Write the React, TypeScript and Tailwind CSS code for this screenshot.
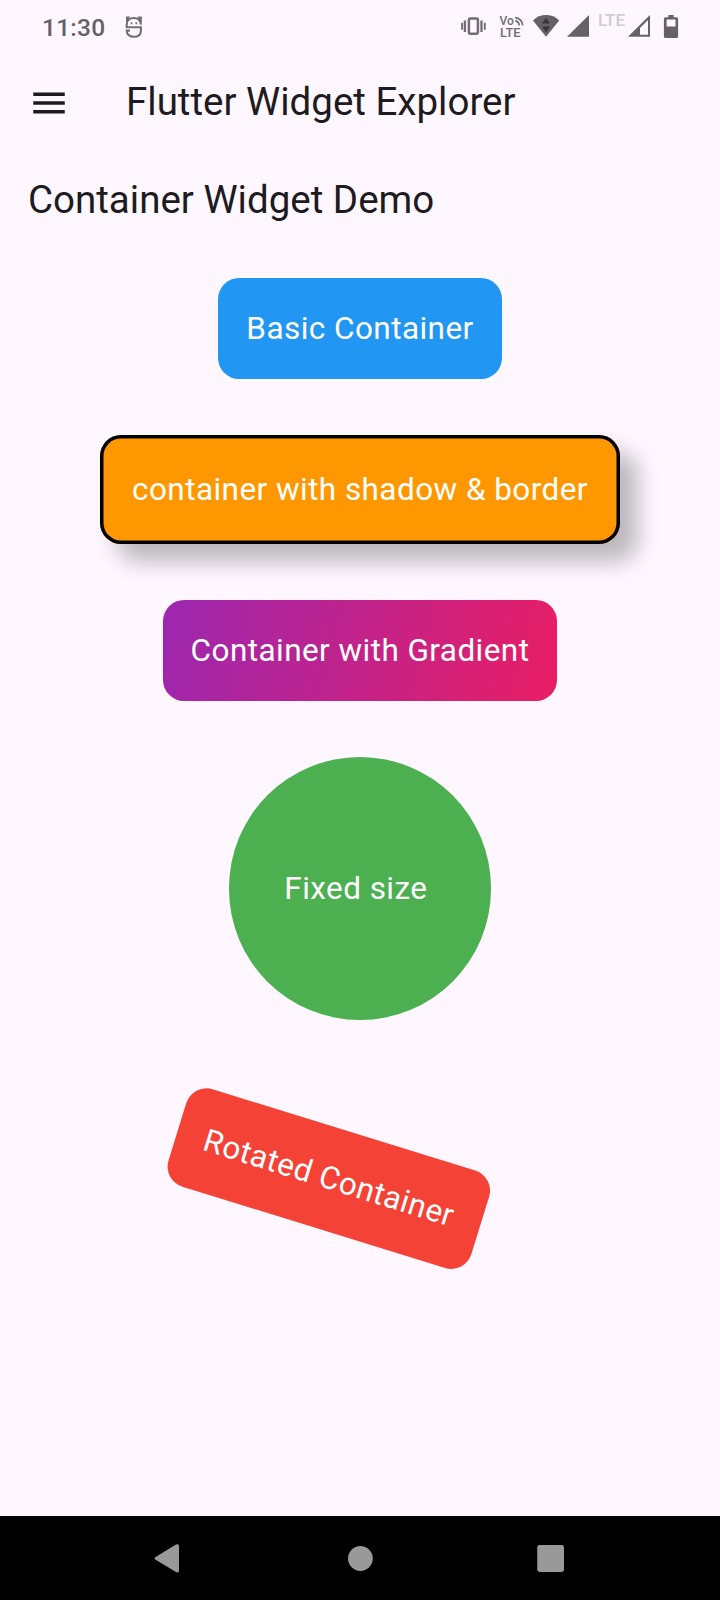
import React from "react";

function DebugIcon() {
  return (
    <svg className="ml-[20px] mt-[15px] h-6 w-[20px] shrink-0" viewBox="0 0 20 24" fill="none" stroke="#716d72" strokeWidth="2.1">
      <path d="M15.9 9.6C15.7 5.2 12.8 3 8.9 3S1.7 5.4 1.7 9.6V12.3H15.9V15.4C15.9 19.6 13 21.8 8.9 21.8S1.7 19.6 1.7 15.6H5" />
      <path d="M1 1.6h4.2L2.4 6.6L1 8zM16.8 1.6h-4.2l2.8 5l1.4 1.4z" fill="#716d72" stroke="none" />
      <path d="M6.5 7.2v2M11.3 7.2v2" strokeWidth="1.7" />
    </svg>
  );
}

function StatusIcons() {
  return (
    <svg className="ml-auto h-[54px] w-[280px] shrink-0" viewBox="440 0 280 54" fill="#656166">
      <g fill="none" stroke="#716d72">
        <rect x="468.9" y="18.5" width="9" height="15.3" rx="1.2" strokeWidth="2.5" />
        <path d="M464.9 20.6v11.4M481.5 20.6v11.4" strokeWidth="2.3" />
        <path d="M462.1 22.8v7M484.8 22.8v7" strokeWidth="1.9" />
      </g>
      <g className="font-[Roboto,sans-serif] font-medium" fill="#716d72">
        <text x="499.6" y="25" fontSize="12" textLength="14.4" lengthAdjust="spacingAndGlyphs">Vo</text>
        <text x="500" y="37" fontSize="12.8" textLength="20.6" lengthAdjust="spacingAndGlyphs">LTE</text>
      </g>
      <path d="M515.2 20.9a4.6 4.6 0 0 1 3.9 4.6M515.2 17.6a8 8 0 0 1 7.5 7.9" fill="none" stroke="#716d72" strokeWidth="1.7" />
      <path d="M533 20.5C540 13.3 552 13.3 559.2 20.5L546 36.8Z" />
      <path d="M546 18l4 5.6h-8zM546 32.4l4-5.8h-8z" fill="#39353a" />
      <path d="M589 15v21.8h-22z" />
      <text x="598" y="26.4" className="font-[Roboto,sans-serif] font-medium" fontSize="16" textLength="27" lengthAdjust="spacingAndGlyphs" fill="#d1cbd2">LTE</text>
      <path fillRule="evenodd" d="M650 15v21.8h-22zM648 20l-8 8v6.8h8z" />
      <path fillRule="evenodd" d="M668.4 15h5.2v2.2h2.9q1.6 0 1.6 1.6V36.4q0 1.6-1.6 1.6h-11q-1.6 0-1.6-1.6V18.8q0-1.6 1.6-1.6h2.9zM666.6 19.6v6.8h8.9v-6.8z" />
    </svg>
  );
}

function StatusBar() {
  return (
    <div className="flex h-[54px] items-start">
      <span className="ml-[42px] mt-[13px] text-[24.5px] font-medium leading-[29px] tracking-[0.25px] text-[#656166]">11:30</span>
      <DebugIcon />
      <StatusIcons />
    </div>
  );
}

function AppBar() {
  return (
    <header className="flex h-[98px] items-center pl-7">
      <svg className="h-[42px] w-[42px] shrink-0" viewBox="0 0 24 24" fill="#1d1b20">
        <path d="M3 18h18v-2H3v2zm0-5h18v-2H3v2zm0-7v2h18V6H3z" />
      </svg>
      <h1 className="mb-1 ml-14 text-[38.5px] leading-[49px] whitespace-nowrap">Flutter Widget Explorer</h1>
    </header>
  );
}

const box = "m-7 shrink-0 whitespace-pre rounded-[21px]";

function Demo() {
  return (
    <main className="flex flex-1 flex-col">
      <h2 className="ml-7 mt-[23px] h-[74.9px] text-[38.5px] leading-[49px]">Container Widget Demo</h2>
      <section className="flex flex-col items-center text-[31.5px] leading-[45.5px] tracking-[0.4375px] text-white">
        <div className={`${box} bg-[#2196f3] p-7`}>Basic Container</div>
        <div className={`${box} bg-[#ff9800] p-[31.5px] shadow-[inset_0_0_0_3.5px_#000,17.5px_17.5px_22px_rgba(0,0,0,0.26)]`}>
          container with shadow &amp; border
        </div>
        <div className={`${box} bg-[linear-gradient(104.4deg,#9c27b0,#e91e63)] p-7`}>Container with Gradient</div>
        <div className="m-7 flex h-[262.5px] w-[262.5px] shrink-0 items-center justify-center whitespace-pre rounded-full bg-[#4caf50]">
          {"Fixed size "}
        </div>
        <div className="origin-top-left rotate-[0.3rad]">
          <div className={`${box} bg-[#f44336] p-7`}>Rotated Container</div>
        </div>
      </section>
    </main>
  );
}

function NavigationBar() {
  return (
    <nav className="h-[84px] shrink-0 bg-black">
      <svg className="h-[84px] w-[720px]" viewBox="0 0 720 84" fill="#999">
        <path d="M155.2 41.2L176 28.6q3-1.4 3 1.6v24.2q0 3-3 1.6L155.2 43.6q-1.6-1.2 0-2.4z" />
        <circle cx="360.4" cy="42.5" r="12.4" />
        <rect x="537.2" y="29.1" width="26.8" height="26.8" rx="2.4" />
      </svg>
    </nav>
  );
}

export default function App() {
  return (
    <div className="flex h-[1600px] w-[720px] flex-col overflow-hidden bg-[#fef7ff] font-[Roboto,sans-serif] text-[#1d1b20]">
      <StatusBar />
      <AppBar />
      <Demo />
      <NavigationBar />
    </div>
  );
}
